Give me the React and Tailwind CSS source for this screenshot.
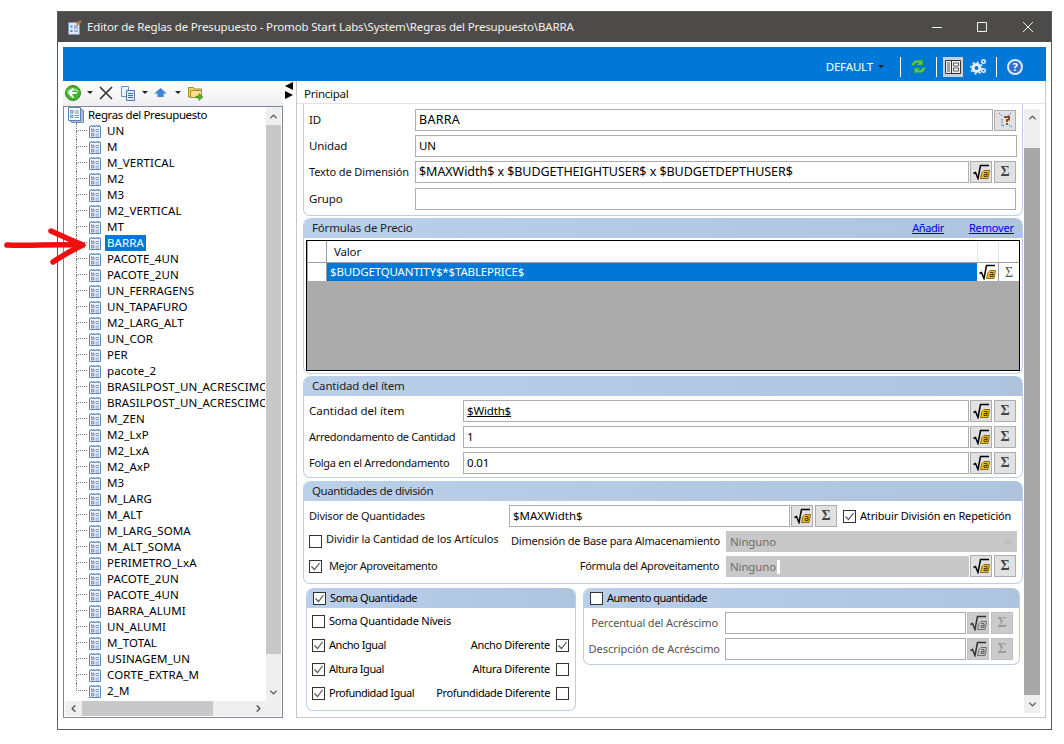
import { ChevronUp, ChevronDown, ChevronLeft, ChevronRight } from "lucide-react";

const treeItems = [
  "UN", "M", "M_VERTICAL", "M2", "M3", "M2_VERTICAL", "MT", "BARRA", "PACOTE_4UN", "PACOTE_2UN",
  "UN_FERRAGENS", "UN_TAPAFURO", "M2_LARG_ALT", "UN_COR", "PER", "pacote_2",
  "BRASILPOST_UN_ACRESCIMO", "BRASILPOST_UN_ACRESCIMO", "M_ZEN", "M2_LxP", "M2_LxA", "M2_AxP", "M3",
  "M_LARG", "M_ALT", "M_LARG_SOMA", "M_ALT_SOMA", "PERIMETRO_LxA", "PACOTE_2UN", "PACOTE_4UN",
  "BARRA_ALUMI", "UN_ALUMI", "M_TOTAL", "USINAGEM_UN", "CORTE_EXTRA_M", "2_M"
];

function DocIcon() {
  return (
    <svg viewBox="0 0 12 13" className="ml-[2px] w-[12px] h-[13px] shrink-0">
      <path d="M.5 1.500h1.500V.5h1v1h1.500V.5h1v1h1.500V.5h1v1h1.500V.5h1v1h1v11H.5z" fill="#f4f7fb" stroke="#5f86b8" />
      <path d="M2.500 4h2.500v2.500H2.500zM2.500 8.500h2.500V11H2.500z" fill="#dbe6f3" stroke="#4d78ad" strokeWidth=".8" />
      <path d="M6.500 4.500h3.500M6.500 6.500h3.500M6.500 9h3.500M6.500 11h3.500" stroke="#6f8fb8" />
    </svg>
  );
}

function RootIcon() {
  return (
    <svg viewBox="0 0 16 16" className="w-[16px] h-[16px]">
      <path d="M3.500 3.500h12v12h-12z" fill="#dfe8f4" stroke="#6f8fbb" />
      <path d="M2 2h12v12H2z" fill="#eef3fa" stroke="#6f8fbb" />
      <path d="M.5.5h12v13H.5z" fill="#fff" stroke="#5b82b5" />
      <path d="M2.500 3.500h2.500V6H2.500zM2.500 8h2.500v2.500H2.500z" fill="#dbe6f3" stroke="#4d78ad" strokeWidth=".8" />
      <path d="M6.500 4h4.500M6.500 6h4.500M6.500 8.500h4.500M6.500 10.500h4.500" stroke="#6f8fb8" />
    </svg>
  );
}

function TreeRow({ label, last }) {
  const selected = label === "BARRA";
  return (
    <div className="flex h-[16px] items-center whitespace-nowrap tracking-[0.1px]">
      <span className="ml-[11px] w-[11px] h-[16px] shrink-0">
        <span className="block h-[8px] border-l border-b border-dotted border-[#777]" />
        {!last && <span className="block h-[8px] border-l border-dotted border-[#777]" />}
      </span>
      <DocIcon />
      <span className={selected ? "ml-[4px] px-[2px] h-[16px] leading-[16px] bg-[#0078d7] text-white" : "ml-[4px] px-[2px] h-[16px] leading-[16px] text-black"}>
        {label}
      </span>
    </div>
  );
}

function TreePanel() {
  return (
    <div className="h-[612px] border border-[#82869a] flex flex-col bg-white px-px pb-px">
      <div className="flex h-[595px]">
        <div className="w-[200px] overflow-hidden">
          <div className="flex h-[16px] items-center">
            <span className="ml-[3px] h-[16px]"><RootIcon /></span>
            <span className="ml-[4px] leading-[16px] text-black tracking-[-0.38px]">Regras del Presupuesto</span>
          </div>
          {treeItems.map((t, i) => (
            <TreeRow key={i} label={t} last={i === treeItems.length - 1} />
          ))}
        </div>
        <div className="w-[15px] ml-auto bg-[#efefef] flex flex-col">
          <div className="h-[18px] flex items-center justify-center"><ChevronUp size={11} strokeWidth={3} color="#555" /></div>
          <div className="h-[529px] bg-[#c8c8c8]" />
          <div className="flex-1 flex items-end justify-center pb-[3px]"><ChevronDown size={11} strokeWidth={3} color="#555" /></div>
        </div>
      </div>
      <div className="h-[15px] bg-[#efefef] flex items-center">
        <div className="w-[17px] flex justify-center"><ChevronLeft size={11} strokeWidth={3} color="#555" /></div>
        <div className="w-[131px] h-[15px] bg-[#c8c8c8]" />
        <div className="ml-auto w-[17px] mr-[14px] flex justify-center"><ChevronRight size={11} strokeWidth={3} color="#555" /></div>
      </div>
    </div>
  );
}

function Caret({ color = "#222" }) {
  return (
    <svg viewBox="0 0 6 3" className="w-[6px] h-[3px]"><path d="M0 0h6L3 3z" fill={color} /></svg>
  );
}

function Toolbar() {
  return (
    <div className="h-[25px] flex items-center bg-gradient-to-b from-white to-[#efefef] pl-[2px] pb-[2px]">
      <svg viewBox="0 0 16 16" className="w-[16px] h-[16px]">
        <circle cx="8" cy="8" r="7.500" fill="#42b52c" stroke="#2b8a1c" />
        <path d="M1.500 7C3 2 13 2 14.500 7 11 5.500 5 5.500 1.500 7z" fill="#8fdc7a" />
        <path d="M8.500 3.500L4 8l4.500 4.500M4 8h8" stroke="#fff" strokeWidth="2" fill="none" />
      </svg>
      <span className="ml-[6px]"><Caret /></span>
      <svg viewBox="0 0 14 14" className="ml-[6px] w-[14px] h-[14px]">
        <path d="M1 1l12 12M13 1L1 13" stroke="#333" strokeWidth="1.600" />
      </svg>
      <svg viewBox="0 0 16 16" className="ml-[7px] w-[16px] h-[16px]">
        <path d="M1.500 1.500h7v10h-7z" fill="#eef3fa" stroke="#6f8fbb" />
        <path d="M6.500 5.500h8v10h-8z" fill="#dce8f6" stroke="#4d78ad" />
        <path d="M8 8.500h5M8 10.500h5M8 12.500h5" stroke="#3c6cab" />
      </svg>
      <span className="ml-[6px]"><Caret /></span>
      <svg viewBox="0 0 14 10" className="ml-[6px] w-[13px] h-[9px]">
        <path d="M7 0l7 6h-3.500v4h-7V6H0z" fill="#3f86d8" />
      </svg>
      <span className="ml-[8px]"><Caret /></span>
      <svg viewBox="0 0 16 16" className="ml-[7px] w-[16px] h-[16px]">
        <path d="M.5 2.500h5l1 1.500h7v8h-13z" fill="#efd36a" stroke="#a78d2a" />
        <path d="M2.500 5.500h11v7h-11z" fill="#f7e38c" stroke="#a78d2a" />
        <path d="M8 11h3V8.500l4 3.500-4 3.500V13H8z" fill="#58b030" stroke="#3b8a1c" strokeWidth=".6" />
      </svg>
    </div>
  );
}

function SqrtIcon({ muted }) {
  return (
    <svg viewBox="0 0 17 16" className="w-[17px] h-[16px]">
      <path d="M.5 9.500L2.500 8.500 5 14.500 7.500 1.500H16" fill="none" stroke={muted ? "#333" : "#000"} strokeWidth="1.500" />
      <path d="M9 8.500l2-2h5.500l-1.500 8H7.500z" fill={muted ? "#ccc" : "#f6c20f"} stroke={muted ? "#555" : "#6b5200"} strokeWidth=".8" />
      <path d="M11 8.500h3v4h-3v-2h3" fill="none" stroke={muted ? "#555" : "#3a2c00"} strokeWidth=".9" />
    </svg>
  );
}

function Buttons({ disabled, className = "" }) {
  const box = disabled
    ? "w-[22px] h-[22px] flex items-center justify-center bg-[#cbcbcb] border border-[#c0c0c0]"
    : "w-[22px] h-[22px] flex items-center justify-center bg-[#e1e1e1] border border-[#adadad]";
  return (
    <div className={"flex gap-[2px] shrink-0 " + className}>
      <div className={box}><SqrtIcon muted={disabled} /></div>
      <div className={box}>
        <span className={disabled ? "font-['Liberation_Serif',serif] font-bold text-[14px] leading-none text-[#9a9a9a]" : "font-['Liberation_Serif',serif] font-bold text-[14px] leading-none text-[#444]"}>Σ</span>
      </div>
    </div>
  );
}

function Input({ value, className = "", textClass = "", underline }) {
  return (
    <div className={"h-[22px] border border-[#adadad] bg-white flex items-center pl-[3px] text-black " + className}>
      <span className={(underline ? "underline " : "") + textClass}>{value}</span>
    </div>
  );
}

function Check({ on, className = "" }) {
  return (
    <span className={"w-[13px] h-[13px] border border-[#333] bg-white shrink-0 flex items-center justify-center " + className}>
      {on && (
        <svg viewBox="0 0 11 11" className="w-[11px] h-[11px]">
          <path d="M1.500 5.500L4.500 8.500 9.500 2" fill="none" stroke="#555" strokeWidth="1.200" />
        </svg>
      )}
    </span>
  );
}

function Section({ title, right, className = "", children }) {
  return (
    <section className={"border border-t-0 border-[#b8d0e8] rounded-[7px] " + className}>
      <div className="h-[20px] rounded-t-[7px] flex items-center px-[8px] bg-gradient-to-r from-[#bad0ea] to-[#adc3de] text-[#222]">
        {title}
        {right}
      </div>
      {children}
    </section>
  );
}

function LabelRow({ label, labelClass, value, underline }) {
  return (
    <div className="flex items-center h-[22px]">
      <span className="w-[159px] pl-[5px] text-[#111]"><span className={labelClass}>{label}</span></span>
      <Input value={value} underline={underline} className="w-[506px]" />
      <Buttons className="ml-px" />
    </div>
  );
}

function SumRow({ left, leftOn, right, rightOn, leftClass, rightClass }) {
  return (
    <div className="flex items-center h-[24px] pl-[5px] pr-[6px]">
      <Check on={leftOn} />
      <span className={"ml-[4px] text-black " + leftClass}>{left}</span>
      <span className={"ml-auto text-black " + rightClass}>{right}</span>
      <Check on={rightOn} className="ml-[6px]" />
    </div>
  );
}

function Blue() {
  return (
    <div className="h-[34px] bg-[#0078d7] flex items-center justify-end text-white pt-[5px]">
      <span>DEFAULT</span>
      <span className="ml-[5px]"><Caret /></span>
      <span className="ml-[16px] w-px h-[20px] bg-white" />
      <svg viewBox="0 0 16 16" className="ml-[9px] w-[17px] h-[17px]">
        <path d="M1.500 7C2 3 6 1 10 2.500L11.800 1v5.500H6.500L8.500 4.800C6.500 4 4.500 5 4 7z" fill="#5ccb3f" stroke="#2c9a1c" strokeWidth=".4" />
        <path d="M14.500 9c-.5 4-4.500 6-8.500 4.500L4.200 15V9.500H9.500L7.500 11.200C9.500 12 11.500 11 12 9z" fill="#5ccb3f" stroke="#2c9a1c" strokeWidth=".4" />
      </svg>
      <span className="ml-[9px] w-px h-[20px] bg-white" />
      <div className="ml-[6px] w-[20px] h-[20px] bg-[#c6d3df] flex items-center justify-center">
        <svg viewBox="0 0 16 16" className="w-[16px] h-[16px]">
          <path d="M.5 1.500h15v13H.5zM6.500 1.500v13" fill="#eee" stroke="#333" />
          <path d="M8.500 4h5v3h-5zM8.500 9h5v3h-5z" fill="#fff" stroke="#555" />
          <path d="M2 4h3M2 6h3M2 8h3M2 10h3M2 12h3" stroke="#555" />
        </svg>
      </div>
      <svg viewBox="0 0 17 17" className="ml-[7px] w-[17px] h-[17px]">
        <circle cx="6.500" cy="10" r="3.500" fill="none" stroke="#e6eef6" strokeWidth="3" />
        <circle cx="6.500" cy="10" r="5.800" fill="none" stroke="#e6eef6" strokeWidth="1.500" strokeDasharray="2 2.500" />
        <circle cx="13.500" cy="3.500" r="1.800" fill="none" stroke="#e6eef6" strokeWidth="1.400" />
        <circle cx="13.500" cy="12.500" r="1.800" fill="none" stroke="#e6eef6" strokeWidth="1.400" />
      </svg>
      <span className="ml-[9px] w-px h-[20px] bg-white" />
      <div className="ml-[10px] mr-[23px] w-[16px] h-[16px] rounded-full bg-[#2f6fd0] border-2 border-[#dde7f5] flex items-center justify-center text-[11px] font-bold leading-none">?</div>
    </div>
  );
}

function TitleBar() {
  return (
    <div className="h-[30px] bg-[#4d4b49] flex items-center text-[#f2f2f2] shrink-0">
      <svg viewBox="0 0 14 15" className="ml-[10px] w-[14px] h-[15px]">
        <path d="M.5 2.500h11v12H.5z" fill="#dfe8f4" stroke="#7a98c0" />
        <path d="M2.500 5.500h2v2h-2zM2.500 10h2v2h-2z" fill="#5b82b5" />
        <path d="M6 6h4M6 8h4M6 11h4" stroke="#5b82b5" />
        <path d="M8 4l4-4 2 1.500-4 4z" fill="#c9762b" />
      </svg>
      <span className="ml-[5px]">{"Editor de Reglas de Presupuesto - Promob Start Labs\\System\\Regras del Presupuesto\\BARRA"}</span>
      <svg viewBox="0 0 10 1" className="ml-auto w-[10px] h-px"><path d="M0 .5h10" stroke="#f2f2f2" /></svg>
      <svg viewBox="0 0 10 10" className="ml-[35px] w-[10px] h-[10px]"><path d="M.5.5h9v9h-9z" fill="none" stroke="#f2f2f2" /></svg>
      <svg viewBox="0 0 10 10" className="ml-[36px] mr-[18px] w-[10px] h-[10px]"><path d="M0 0l10 10M10 0L0 10" stroke="#f2f2f2" /></svg>
    </div>
  );
}

function FormulaGrid() {
  return (
    <div className="mx-[2px] mt-[2px] h-[131px] border border-black bg-[#ababab] flex flex-col">
      <div className="h-[22px] bg-white flex border-b border-[#a0a0a0] ml-px">
        <div className="w-[19px] border-r border-[#a0a0a0]" />
        <div className="flex-1 flex items-center pl-[7px] pt-px text-[#111]">Valor</div>
        <div className="w-[21px] border-l border-[#e4e4e4]" />
        <div className="w-[21px] border-l border-[#e4e4e4]" />
      </div>
      <div className="h-[18px] bg-white flex ml-px">
        <div className="w-[19px] border-r border-[#a0a0a0]" />
        <div className="flex-1 bg-[#0078d7] text-white flex items-center pl-[3px]">$BUDGETQUANTITY$*$TABLEPRICE$</div>
        <div className="w-[21px] flex items-center justify-center"><SqrtIcon /></div>
        <div className="w-[21px] border-l border-[#a0a0a0] flex items-center justify-center font-['Liberation_Serif',serif] text-[14px] text-[#555]">Σ</div>
      </div>
    </div>
  );
}

function MainPanel() {
  return (
    <div className="w-[750px] h-[637px] border-x border-b border-[#c8c8c8] flex flex-col">
      <div className="h-[23px] border-b border-[#e2e2e2] flex items-center pl-[7px] pt-[3px] text-[#111] tracking-[-0.25px]">Principal</div>
      <div className="flex flex-1">
        <div className="w-[720px] ml-[6px]">
          <section className="h-[112px] border border-t-0 border-[#b8d0e8] rounded-b-[7px] pt-[5px] flex flex-col gap-[4px]">
            <div className="flex items-center h-[22px]">
              <span className="w-[111px] pl-[5px] text-[#111]">ID</span>
              <Input value="BARRA" className="w-[578px]" textClass="text-[12.5px] tracking-[0.3px]" />
              <div className="ml-px w-[22px] h-[21px] bg-[#e1e1e1] border border-[#adadad] flex items-center justify-center">
                <svg viewBox="0 0 16 16" className="w-[16px] h-[16px]">
                  <path d="M2 1l3 3M14 1l-3 3M5 7v7h3M15 15l-3-2" fill="none" stroke="#2f6fd0" strokeDasharray="1.500 1" />
                  <path d="M7 4h6v4.500h-2V10H9V7h2V6H7z" fill="#8a4b20" />
                  <path d="M9 11h2v2H9z" fill="#8a4b20" />
                </svg>
              </div>
            </div>
            <div className="flex items-center h-[22px]">
              <span className="w-[111px] pl-[5px] text-[#111]">Unidad</span>
              <Input value="UN" className="w-[602px]" />
            </div>
            <div className="flex items-center h-[22px]">
              <span className="w-[111px] pl-[5px] text-[#111] text-[11px] tracking-[-0.13px]">Texto de Dimensión</span>
              <Input value="$MAXWidth$ x $BUDGETHEIGHTUSER$ x $BUDGETDEPTHUSER$" className="w-[554px]" textClass="text-[12.5px] tracking-[-0.05px]" />
              <Buttons className="ml-px" />
            </div>
            <div className="flex items-center h-[22px] mt-px">
              <span className="w-[111px] pl-[5px] text-[#111]">Grupo</span>
              <Input value="" className="w-[601px]" />
            </div>
          </section>

          <Section
            className="mt-[2px] h-[156px]"
            title="Fórmulas de Precio"
            right={
              <div className="ml-auto flex gap-[25px] text-[#0000e0] underline text-[11px]">
                <span className="tracking-[-0.4px]">Añadir</span>
                <span className="tracking-[-0.14px]">Remover</span>
              </div>
            }
          >
            <FormulaGrid />
          </Section>

          <Section className="mt-[2px] h-[102px]" title="Cantidad del ítem">
            <div className="pt-[4px] flex flex-col gap-[4px]">
              <LabelRow label="Cantidad del ítem" labelClass="tracking-[0px]" value="$Width$" underline />
              <LabelRow label="Arredondamento de Cantidad" labelClass="text-[11px] tracking-[-0.31px]" value="1" />
              <LabelRow label="Folga en el Arredondamento" labelClass="text-[11px] tracking-[-0.29px]" value="0.01" />
            </div>
          </Section>

          <Section className="mt-[3px] h-[103px]" title={<span className="tracking-[-0.4px]">Quantidades de división</span>}>
            <div className="pt-[4px] pl-[5px]">
              <div className="flex items-center h-[22px]">
                <span className="w-[200px] text-[#111] text-[11px] tracking-[-0.23px]">Divisor de Quantidades</span>
                <Input value="$MAXWidth$" className="w-[281px]" textClass="tracking-[0px]" />
                <Buttons className="ml-px" />
                <Check on className="ml-[6px]" />
                <span className="ml-[4px] text-black text-[11px] tracking-[-0.16px]">Atribuir División en Repetición</span>
              </div>
              <div className="flex items-center h-[21px] mt-[4px]">
                <Check />
                <span className="ml-[4px] mb-[5px] w-[185px] text-[#111] text-[11px] tracking-[-0.1px]">Dividir la Cantidad de los Artículos</span>
                <span className="w-[215px] text-[#111] text-[11px] tracking-[-0.19px]">Dimensión de Base para Almacenamiento</span>
                <div className="w-[291px] h-[21px] bg-[#c8c8c8] flex items-center pl-[4px] text-[#6d6d6d]">
                  Ninguno
                  <ChevronDown size={12} color="#aaa" className="ml-auto mr-[3px]" />
                </div>
              </div>
              <div className="flex items-center h-[22px] mt-[3px]">
                <Check on />
                <span className="ml-[7px] text-[#111] text-[11px] tracking-[-0.4px]">Mejor Aproveitamento</span>
                <span className="ml-auto mr-[7px] text-[#111] text-[11px] tracking-[-0.33px]">Fórmula del Aproveitamento</span>
                <div className="w-[243px] h-[22px] bg-[#c8c8c8] border-t border-white flex items-center pl-[4px] text-[#6d6d6d]">
                  Ninguno
                  <span className="ml-[1px] w-[3px] h-[14px] bg-white" />
                </div>
                <Buttons className="ml-px mr-[6px]" />
              </div>
            </div>
          </Section>

          <div className="flex items-start mt-[4px] ml-[3px]">
            <Section
              className="w-[270px] h-[123px]"
              title={
                <span className="flex items-center -ml-[2px]">
                  <Check on />
                  <span className="ml-[4px] text-black text-[11px] tracking-[-0.4px]">Soma Quantidade</span>
                </span>
              }
            >
              <div className="pt-[1px]">
                <div className="flex items-center h-[24px] pl-[5px]">
                  <Check />
                  <span className="ml-[4px] text-black text-[11px] tracking-[-0.23px]">Soma Quantidade Níveis</span>
                </div>
                <SumRow left="Ancho Igual" leftOn right="Ancho Diferente" rightOn leftClass="text-[11px] tracking-[-0.45px]" rightClass="text-[11px] tracking-[-0.3px]" />
                <SumRow left="Altura Igual" leftOn right="Altura Diferente" leftClass="text-[11px] tracking-[-0.45px]" rightClass="text-[11px] tracking-[-0.3px]" />
                <SumRow left="Profundidad Igual" leftOn right="Profundidade Diferente" leftClass="text-[11px] tracking-[-0.5px]" rightClass="text-[11px] tracking-[-0.36px]" />
              </div>
            </Section>
            <Section
              className="ml-[7px] w-[437px] h-[77px]"
              title={
                <span className="flex items-center -ml-[2px]">
                  <Check />
                  <span className="ml-[4px] text-black text-[11px] tracking-[-0.55px]">Aumento quantidade</span>
                </span>
              }
            >
              <div className="pt-[4px] flex flex-col gap-[4px]">
                <div className="flex items-center h-[22px]">
                  <span className="w-[141px] pr-[7px] text-right text-[#555] text-[11px] tracking-[-0.13px]">Percentual del Acréscimo</span>
                  <Input value="" className="w-[241px]" />
                  <Buttons disabled className="ml-px" />
                </div>
                <div className="flex items-center h-[22px]">
                  <span className="w-[141px] pr-[5px] text-right text-[#555] text-[11px] tracking-[-0.04px]">Descripción de Acréscimo</span>
                  <Input value="" className="w-[241px]" />
                  <Buttons disabled className="ml-px" />
                </div>
              </div>
            </Section>
          </div>
        </div>
        <div className="ml-[1px] mt-[5px] w-[16px] h-[604px] bg-[#efefef] flex flex-col">
          <div className="h-[39px] flex justify-center pt-[3px]"><ChevronUp size={11} strokeWidth={3} color="#555" /></div>
          <div className="h-[547px] bg-[#a8a8a8]" />
          <div className="flex-1 flex items-center justify-center"><ChevronDown size={11} strokeWidth={3} color="#555" /></div>
        </div>
      </div>
    </div>
  );
}

export default function App() {
  return (
    <div className="relative w-[1064px] h-[744px] bg-white overflow-hidden pt-[11px] pl-[57px] font-['Noto_Sans',sans-serif] text-[11.5px] tracking-[-0.16px] whitespace-nowrap">
      <div className="w-[995px] h-[719px] border border-[#5a5a5a] flex flex-col bg-white">
        <TitleBar />
        <div className="px-[5px] pt-[5px]">
          <Blue />
          <div className="flex">
            <div className="w-[220px]">
              <Toolbar />
              <TreePanel />
            </div>
            <div className="w-[13px] flex flex-col pl-[2px] pt-[1px]">
              <svg viewBox="0 0 8 17" className="w-[8px] h-[17px]">
                <path d="M8 0v8L0 4zM0 9l8 4-8 4z" fill="#000" />
              </svg>
            </div>
            <MainPanel />
          </div>
        </div>
      </div>

      {/* red arrow painted over the screenshot */}
      <svg viewBox="0 0 85 40" className="absolute left-[4px] top-[227px] w-[85px] h-[40px]">
        <path d="M3 18 C 25 19, 50 17, 76 18" fill="none" stroke="#f00e0e" strokeWidth="5.500" strokeLinecap="round" />
        <path d="M47 4 C 58 9, 68 14, 79 18 C 68 23, 58 29, 49 35" fill="none" stroke="#f00e0e" strokeWidth="5.500" strokeLinecap="round" strokeLinejoin="round" />
      </svg>
    </div>
  );
}
